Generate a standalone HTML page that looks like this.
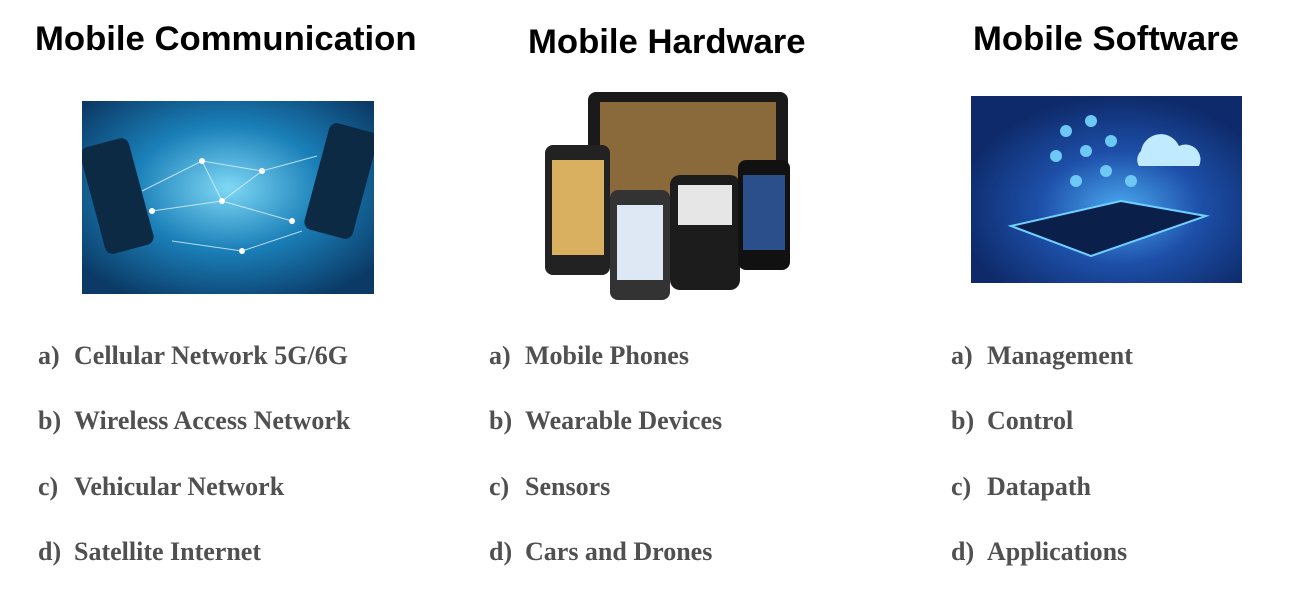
<!DOCTYPE html>
<html><head><meta charset="utf-8"><style>
body{margin:0;width:1306px;height:591px;background:#fff;position:relative;overflow:hidden;font-family:"Liberation Sans",sans-serif}
.h{position:absolute;font-weight:bold;font-size:34.7px;color:#000;white-space:nowrap}
.li{position:absolute;font-family:"Liberation Serif",serif;font-weight:bold;font-size:26px;color:#505050;white-space:nowrap}
.li span{display:inline-block;width:36px}
</style></head><body>
<div class="h" style="left:35px;top:20px">Mobile Communication</div>
<div class="h" style="left:528px;top:23px">Mobile Hardware</div>
<div class="h" style="left:973px;top:20px">Mobile Software</div>

<svg style="position:absolute;left:82px;top:101px" width="292" height="193">
<defs><radialGradient id="g1" cx="50%" cy="45%" r="65%"><stop offset="0" stop-color="#7fd8f5"/><stop offset="0.5" stop-color="#1a7fb8"/><stop offset="1" stop-color="#0b3a66"/></radialGradient></defs>
<rect width="292" height="193" fill="url(#g1)"/>
<rect x="10" y="40" width="50" height="110" rx="8" fill="#0c2a44" transform="rotate(-15 35 95)"/>
<rect x="234" y="25" width="50" height="110" rx="8" fill="#0c2a44" transform="rotate(15 259 80)"/>
<g stroke="#dff4ff" stroke-width="1" fill="none" opacity="0.8"><path d="M60 90L120 60L180 70L235 55M70 110L140 100L210 120M120 60L140 100L180 70M90 140L160 150L220 130"/></g>
<g fill="#ffffff"><circle cx="120" cy="60" r="3"/><circle cx="180" cy="70" r="3"/><circle cx="140" cy="100" r="3"/><circle cx="210" cy="120" r="3"/><circle cx="70" cy="110" r="3"/><circle cx="160" cy="150" r="3"/></g>
</svg>

<svg style="position:absolute;left:540px;top:90px" width="255" height="215">
<rect x="48" y="2" width="200" height="150" rx="8" fill="#1a1a1a"/>
<rect x="60" y="12" width="176" height="130" fill="#8a6a3a"/>
<rect x="5" y="55" width="65" height="130" rx="8" fill="#222"/>
<rect x="12" y="70" width="52" height="95" fill="#d8b060"/>
<rect x="70" y="100" width="60" height="110" rx="8" fill="#333"/>
<rect x="77" y="115" width="46" height="75" fill="#dde8f4"/>
<rect x="130" y="85" width="70" height="115" rx="10" fill="#1c1c1c"/>
<rect x="138" y="95" width="54" height="40" fill="#e6e6e6"/>
<rect x="198" y="70" width="52" height="110" rx="8" fill="#111"/>
<rect x="203" y="85" width="42" height="75" fill="#2a4f8a"/>
</svg>

<svg style="position:absolute;left:971px;top:96px" width="271" height="187">
<defs><radialGradient id="g3" cx="55%" cy="60%" r="60%"><stop offset="0" stop-color="#4aa8f0"/><stop offset="0.5" stop-color="#1d4fa8"/><stop offset="1" stop-color="#0e2a6a"/></radialGradient></defs>
<rect width="271" height="187" fill="url(#g3)"/>
<path d="M40 130L150 105L235 120L120 160Z" fill="#0a1f4a" stroke="#6fd0ff" stroke-width="2"/>
<path d="M170 55a20 20 0 0 1 38-5a15 15 0 0 1 20 20h-60a12 12 0 0 1 2-15z" fill="#bfeaff"/>
<g fill="#6ec8f5"><circle cx="95" cy="35" r="6"/><circle cx="120" cy="25" r="6"/><circle cx="85" cy="60" r="6"/><circle cx="115" cy="55" r="6"/><circle cx="140" cy="45" r="6"/><circle cx="105" cy="85" r="6"/><circle cx="135" cy="75" r="6"/><circle cx="160" cy="85" r="6"/></g>
</svg>

<div class="li" style="left:38px;top:341px"><span>a)</span>Cellular Network 5G/6G</div>
<div class="li" style="left:38px;top:406px"><span>b)</span>Wireless Access Network</div>
<div class="li" style="left:38px;top:472px"><span>c)</span>Vehicular Network</div>
<div class="li" style="left:38px;top:537px"><span>d)</span>Satellite Internet</div>

<div class="li" style="left:489px;top:341px"><span>a)</span>Mobile Phones</div>
<div class="li" style="left:489px;top:406px"><span>b)</span>Wearable Devices</div>
<div class="li" style="left:489px;top:472px"><span>c)</span>Sensors</div>
<div class="li" style="left:489px;top:537px"><span>d)</span>Cars and Drones</div>

<div class="li" style="left:951px;top:341px"><span>a)</span>Management</div>
<div class="li" style="left:951px;top:406px"><span>b)</span>Control</div>
<div class="li" style="left:951px;top:472px"><span>c)</span>Datapath</div>
<div class="li" style="left:951px;top:537px"><span>d)</span>Applications</div>
</body></html>
